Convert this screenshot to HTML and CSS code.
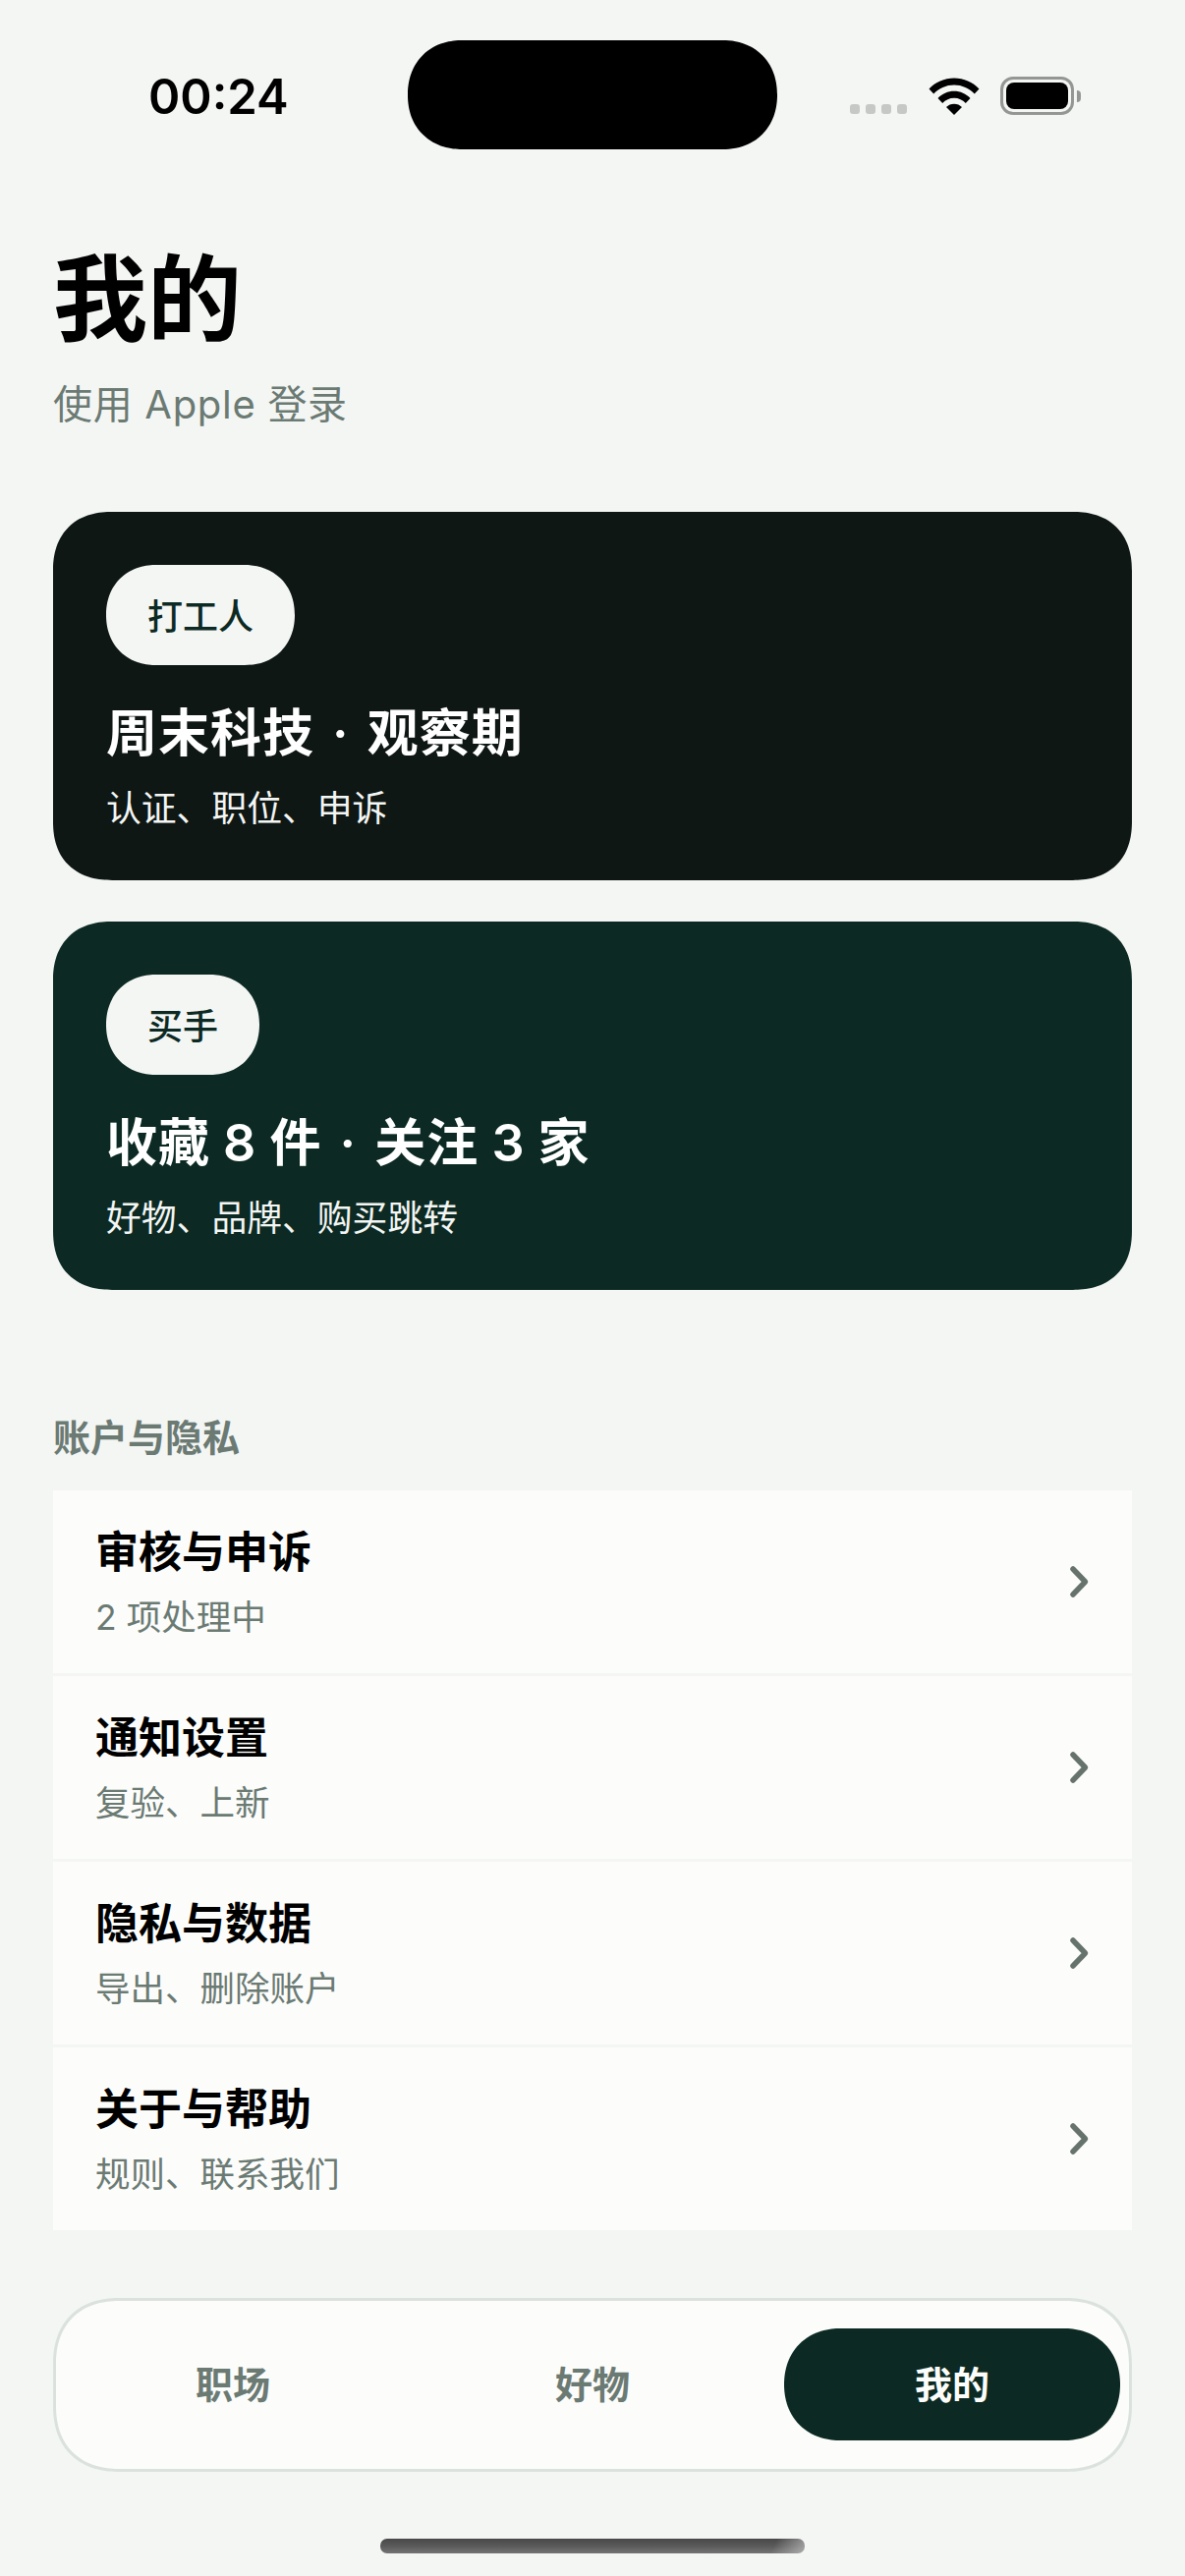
FILE: index.html
```html
<!DOCTYPE html>
<html lang="zh-CN">
<head>
<meta charset="utf-8">
<title>我的</title>
<link rel="stylesheet" href="styles.css">
</head>
<body>
<div class="screen">
  <header class="status">
    <div class="time">00:24</div>
    <div class="island"></div>
    <div class="indicators">
      <div class="signal"><i></i><i></i><i></i><i></i></div>
      <svg class="wifi" width="52" height="38" viewBox="0 0 52 38"><path d="M0.5 11.5 C7 4.5 16 0.5 26 0.5 C36 0.5 45 4.5 51.5 11.5 L46.8 16.5 C41.5 10.8 34.2 7.4 26 7.4 C17.8 7.4 10.5 10.8 5.2 16.5 Z M9.5 21 C13.8 16.5 19.6 13.8 26 13.8 C32.4 13.8 38.2 16.5 42.5 21 L37.8 26 C34.8 22.8 30.6 20.8 26 20.8 C21.4 20.8 17.2 22.8 14.2 26 Z M18 30 C20.1 27.9 22.9 26.7 26 26.7 C29.1 26.7 31.9 27.9 34 30 L26 38 Z" fill="#000"/></svg>
      <div class="battery"><div class="battery-body"><div class="battery-fill"></div></div><div class="battery-cap"></div></div>
    </div>
  </header>

  <main class="content">
    <h1 class="title">我的</h1>
    <p class="subtitle">使用 Apple 登录</p>

    <section class="card card-work">
      <span class="pill pill-work">打工人</span>
      <h2 class="card-title">周末科技 <span class="dot">·</span> 观察期</h2>
      <p class="card-sub">认证、职位、申诉</p>
    </section>
    <section class="card card-buy">
      <span class="pill pill-buy">买手</span>
      <h2 class="card-title">收藏 8 件 <span class="dot">·</span> 关注 3 家</h2>
      <p class="card-sub">好物、品牌、购买跳转</p>
    </section>

    <h3 class="section-head">账户与隐私</h3>
    <ul class="list">
      <li class="row">
        <div class="row-text"><div class="row-title">审核与申诉</div><div class="row-sub">2 项处理中</div></div>
        <svg class="chev" width="22" height="34" viewBox="0 0 22 34"><path d="M4 4 L16.5 17 L4 30" fill="none" stroke="#66736d" stroke-width="5.5" stroke-linecap="round" stroke-linejoin="round"/></svg>
      </li>
      <li class="row">
        <div class="row-text"><div class="row-title">通知设置</div><div class="row-sub">复验、上新</div></div>
        <svg class="chev" width="22" height="34" viewBox="0 0 22 34"><path d="M4 4 L16.5 17 L4 30" fill="none" stroke="#66736d" stroke-width="5.5" stroke-linecap="round" stroke-linejoin="round"/></svg>
      </li>
      <li class="row">
        <div class="row-text"><div class="row-title">隐私与数据</div><div class="row-sub">导出、删除账户</div></div>
        <svg class="chev" width="22" height="34" viewBox="0 0 22 34"><path d="M4 4 L16.5 17 L4 30" fill="none" stroke="#66736d" stroke-width="5.5" stroke-linecap="round" stroke-linejoin="round"/></svg>
      </li>
      <li class="row">
        <div class="row-text"><div class="row-title">关于与帮助</div><div class="row-sub">规则、联系我们</div></div>
        <svg class="chev" width="22" height="34" viewBox="0 0 22 34"><path d="M4 4 L16.5 17 L4 30" fill="none" stroke="#66736d" stroke-width="5.5" stroke-linecap="round" stroke-linejoin="round"/></svg>
      </li>
    </ul>

    <nav class="tabs">
      <div class="tab">职场</div>
      <div class="tab">好物</div>
      <div class="tab tab-active">我的</div>
    </nav>
  </main>

  <div class="home-bar"></div>
</div>
</body>
</html>
```
FILE: styles.css
```css
* { box-sizing: border-box; }
html, body { margin: 0; padding: 0; }
body {
  width: 1206px;
  height: 2622px;
  background: #f4f6f4;
  font-family: "Inter", "Noto Sans CJK SC", sans-serif;
  overflow: hidden;
}
.screen { width: 1206px; height: 2622px; display: flex; flex-direction: column; }

/* status bar */
.status {
  display: grid;
  grid-template-columns: 415px 376px 1fr;
  height: 152px;
  padding-top: 41px;
}
.time {
  padding: 25px 0 0 151px;
  font: 600 49px/66px "Inter", sans-serif;
  color: #000;
}
.island { height: 111px; background: #000; border-radius: 55px; corner-shape: superellipse(1.1); }
.indicators { display: flex; align-items: flex-start; padding-top: 37px; }
.signal { display: flex; gap: 6px; margin: 28px 0 0 74px; }
.signal i { display: block; width: 10px; height: 10px; border-radius: 3px; background: #c6c8c6; }
.wifi { margin-left: 22px; margin-top: 1px; }
.battery { display: flex; align-items: center; margin-left: 21px; }
.battery-body {
  width: 75px;
  height: 39px;
  border: 3px solid #949694;
  border-radius: 13px;
  padding: 3px;
}
.battery-fill { width: 100%; height: 100%; background: #000; border-radius: 8px; }
.battery-cap { width: 4px; height: 12px; margin-left: 3px; background: #949694; border-radius: 0 6px 6px 0; }

/* content */
.content { padding: 0 54px; display: flex; flex-direction: column; }
.title {
  margin: 78px 0 0;
  font: 700 96px/136px "Noto Sans CJK SC", sans-serif;
  color: #000;
}
.subtitle {
  margin: 16px 0 0;
  font: 400 40px/60px "Inter", "Noto Sans CJK SC", sans-serif;
  letter-spacing: 0.7px;
  color: #6b7a73;
}
.card {
  height: 375px;
  padding: 54px 54px 0;
  border-radius: 60px;
  corner-shape: superellipse(1.2);
  color: #fff;
  display: flex;
  flex-direction: column;
  align-items: flex-start;
}
.card-work { margin-top: 79px; background: #0e1714; }
.card-buy { margin-top: 42px; background: #0c2a23; }
.pill {
  height: 102px;
  padding: 0 42px;
  border-radius: 51px;
  corner-shape: superellipse(1.1);
  background: #f4f6f4;
  color: #0c2a23;
  font: 500 36px/100px "Noto Sans CJK SC", sans-serif;
}
.card-title {
  margin: 32px 0 0;
  font: 600 52px/76px "Inter", "Noto Sans CJK SC", sans-serif;
  letter-spacing: 1px;
  word-spacing: -1px;
  color: #fff;
}
.dot { margin: 0 5px; }
.card-sub {
  margin: 9px 0 0;
  font: 400 35.8px/52px "Noto Sans CJK SC", sans-serif;
  color: #f4f6f4;
}
.section-head {
  margin: 120px 0 0;
  font: 700 38px/56px "Noto Sans CJK SC", sans-serif;
  color: #6b7a73;
}
.list { list-style: none; margin: 28px 0 0; padding: 0; display: flex; flex-direction: column; gap: 3px; }
.row {
  height: 186px;
  padding: 0 43px;
  background: #fcfdfb;
  display: flex;
  align-items: center;
  justify-content: space-between;
}
.row-title { font: 700 44px/56px "Noto Sans CJK SC", sans-serif; color: #000; }
.row-sub { margin-top: 18px; font: 400 35.5px/48px "Inter", "Noto Sans CJK SC", sans-serif; color: #6b7a73; }
.chev { flex: none; margin-right: -1px; }

/* tabs */
.tabs {
  margin-top: 69px;
  height: 177px;
  padding: 28px 9px;
  border: 3px solid #dbe2de;
  border-radius: 68px;
  corner-shape: superellipse(1.2);
  background: #fcfdfb;
  display: grid;
  grid-template-columns: repeat(3, 1fr);
  gap: 24px;
}
.tab {
  height: 114px;
  border-radius: 57px;
  corner-shape: superellipse(1.1);
  text-align: center;
  font: 700 38px/110px "Noto Sans CJK SC", sans-serif;
  color: #6b7a73;
}
.tab-active { background: #0c2a23; color: #fcfdfb; }

.home-bar {
  width: 432px;
  height: 15px;
  margin: 68px auto 0;
  border-radius: 7px;
  background:
    linear-gradient(115deg, rgba(190, 190, 190, 0) 92%, rgba(190, 190, 190, 0.75) 100%),
    linear-gradient(180deg, #484848 0%, #5a5a5a 50%, #747474 100%);
}
```
